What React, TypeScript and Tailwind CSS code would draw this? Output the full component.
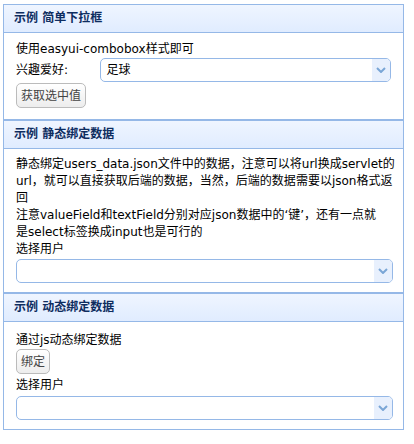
import React from 'react';

const font = { fontFamily: '"DejaVu Sans", "Noto Sans CJK SC", sans-serif' };

const Chevron = () => (
  <svg width="10" height="6" viewBox="0 0 10 6">
    <path d="M1 1 L5 5 L9 1" fill="none" stroke="#7aa6d6" strokeWidth="2" />
  </svg>
);

const Combo = ({ value, className }: { value?: string; className?: string }) => (
  <div
    className={`flex h-[24px] items-stretch rounded-[5px] border border-[#95b8e7] bg-white overflow-hidden ${className ?? ''}`}
  >
    <div className="flex-1 px-[6px] text-[12px] leading-[22px] text-black">{value}</div>
    <div className="flex w-[18px] items-center justify-center bg-[#e8f0fd]">
      <Chevron />
    </div>
  </div>
);

const Btn = ({ children }: { children: React.ReactNode }) => (
  <button className="h-[25px] rounded-[5px] border border-[#bbbbbb] bg-gradient-to-b from-white to-[#ededed] px-[4px] text-[12px] leading-[22px] text-[#444]">
    {children}
  </button>
);

const Panel = ({ title, children, bodyClass }: { title: string; children: React.ReactNode; bodyClass: string }) => (
  <div className="border border-[#95b8e7]">
    <div className="h-[28px] border-b border-[#95b8e7] bg-gradient-to-b from-[#eff5ff] to-[#e0ecff] pl-[10px] text-[12px] font-bold leading-[27px] text-[#0e2d5f]">
      {title}
    </div>
    <div className={`bg-white px-[12px] text-[12px] text-black ${bodyClass}`}>{children}</div>
  </div>
);

export default function App() {
  return (
    <div className="h-[444px] w-[414px] bg-white pl-[3px] pt-[4px]" style={font}>
      <div className="flex w-[401px] flex-col">
        <Panel title="示例 简单下拉框" bodyClass="pt-[7px] pb-[11px]">
          <div className="leading-[18px]">使用easyui-combobox样式即可</div>
          <div className="flex items-center">
            <span className="w-[84px] leading-[18px]">兴趣爱好:</span>
            <Combo value="足球" className="w-[293px]" />
          </div>
          <div className="mt-[1px]">
            <Btn>获取选中值</Btn>
          </div>
        </Panel>
        <Panel title="示例 静态绑定数据" bodyClass="pt-[7px] pb-[9px]">
          <div className="whitespace-nowrap leading-[17px]">
            <div>静态绑定users_data.json文件中的数据，注意可以将url换成servlet的</div>
            <div>url，就可以直接获取后端的数据，当然，后端的数据需要以json格式返</div>
            <div>回</div>
            <div>注意valueField和textField分别对应json数据中的‘键’，还有一点就</div>
            <div>是select标签换成input也是可行的</div>
            <div>选择用户</div>
          </div>
          <Combo className="mt-[1px] w-[377px]" />
        </Panel>
        <Panel title="示例 动态绑定数据" bodyClass="pt-[10px] pb-[9px]">
          <div className="leading-[17px]">通过js动态绑定数据</div>
          <Btn>绑定</Btn>
          <div className="leading-[22px]">选择用户</div>
          <Combo className="w-[377px]" />
        </Panel>
      </div>
    </div>
  );
}
